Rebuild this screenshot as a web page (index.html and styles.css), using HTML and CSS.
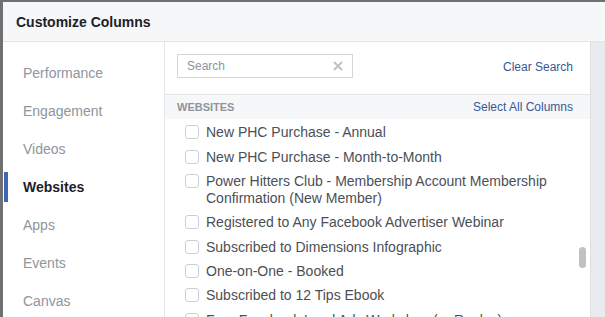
FILE: index.html
```html
<!DOCTYPE html>
<html lang="en">
<head>
  <meta charset="UTF-8">
  <title>Customize Columns</title>
  <link rel="stylesheet" href="styles.css">
</head>
<body>
  <div class="dialog">
    <div class="header">Customize Columns</div>

    <div class="body">
      <ul class="nav">
        <li>Performance</li>
        <li>Engagement</li>
        <li>Videos</li>
        <li class="active">Websites</li>
        <li>Apps</li>
        <li>Events</li>
        <li>Canvas</li>
      </ul>

      <div class="cols">
        <div class="toolbar">
          <div class="search">
            <span>Search</span>
            <svg width="10" height="10" viewBox="0 0 10 10"><path d="M1 1L9 9M9 1L1 9" stroke="#bec3c9" stroke-width="2"/></svg>
          </div>
          <a class="link" href="#">Clear Search</a>
        </div>

        <div class="section">
          <span class="section-title">WEBSITES</span>
          <a class="link" href="#">Select All Columns</a>
        </div>

        <ul class="list">
          <li><span class="check"></span>New PHC Purchase - Annual</li>
          <li><span class="check"></span>New PHC Purchase - Month-to-Month</li>
          <li><span class="check"></span>Power Hitters Club - Membership Account Membership Confirmation (New Member)</li>
          <li><span class="check"></span>Registered to Any Facebook Advertiser Webinar</li>
          <li><span class="check"></span>Subscribed to Dimensions Infographic</li>
          <li><span class="check"></span>One-on-One - Booked</li>
          <li><span class="check"></span>Subscribed to 12 Tips Ebook</li>
          <li><span class="check"></span>Free Facebook Lead Ads Workshop (or Replay)</li>
        </ul>

        <div class="thumb"></div>
      </div>

      <div class="gutter"></div>
    </div>
  </div>
</body>
</html>
```

FILE: styles.css
```css
body {
  margin: 0;
  background: #6f7072;
  font-family: "Liberation Sans", Arial, sans-serif;
  overflow: hidden;
}

.dialog {
  margin: 2px 0 0 3px;
  height: 315px;
  background: #fff;
  overflow: hidden;
}

.header {
  height: 39px;
  line-height: 40px;
  padding-left: 13px;
  background: #f6f7f9;
  border-bottom: 1px solid #e5e5e5;
  color: #1d2129;
  font-size: 14px;
  font-weight: bold;
}

.body {
  display: flex;
  height: 275px;
}

/* menu de la izquierda */
.nav {
  list-style: none;
  margin: 0;
  padding: 16px 0 0;
  width: 161px;
  border-right: 1px solid #e5e6e9;
}

.nav li {
  height: 30px;
  line-height: 30px;
  margin: 0 0 8px 1px;
  padding-left: 15px;
  border-left: 4px solid transparent;
  color: #90949c;
  font-size: 14px;
}

.nav li.active {
  border-left-color: #4267b2;
  color: #1d2129;
  font-weight: bold;
}

.cols {
  position: relative;
  width: 425px;
}

.toolbar {
  display: flex;
  justify-content: space-between;
  align-items: flex-start;
  box-sizing: border-box;
  height: 52px;
  padding: 12px 17px 0 12px;
}

.search {
  display: flex;
  justify-content: space-between;
  align-items: center;
  box-sizing: border-box;
  width: 176px;
  height: 24px;
  padding: 0 9px 1px 9px;
  border: 1px solid #d3d6db;
  color: #90949c;
  font-size: 12px;
}

.link {
  color: #365899;
  font-size: 12px;
  text-decoration: none;
}

.toolbar .link {
  margin-top: 6px;
}

.section {
  display: flex;
  justify-content: space-between;
  align-items: center;
  height: 24px;
  padding: 0 17px 0 12px;
  background: #f6f7f9;
  border-top: 1px solid #e5e5e5;
}

.section-title {
  color: #90949c;
  font-size: 11px;
  font-weight: bold;
}

.list {
  list-style: none;
  margin: 0;
  padding: 1.5px 17px 0 20px;
}

.list li {
  display: flex;
  align-items: flex-start;
  gap: 7px;
  padding: 3.7px 0;
  line-height: 17px;
  color: #4b4f56;
  font-size: 14px;
}

.check {
  flex: none;
  box-sizing: border-box;
  width: 14px;
  height: 14px;
  margin-top: 1px;
  border: 1px solid #ccd0d5;
  border-radius: 3px;
  background: #fff;
}

/* barra de scroll */
.thumb {
  position: absolute;
  left: 414px;
  top: 205px;
  width: 7px;
  height: 21px;
  border-radius: 4px;
  background: #c1c1c1;
}

.gutter {
  flex: 1;
  background: #e9ebee;
  border-left: 1px solid #dddfe2;
}
```
